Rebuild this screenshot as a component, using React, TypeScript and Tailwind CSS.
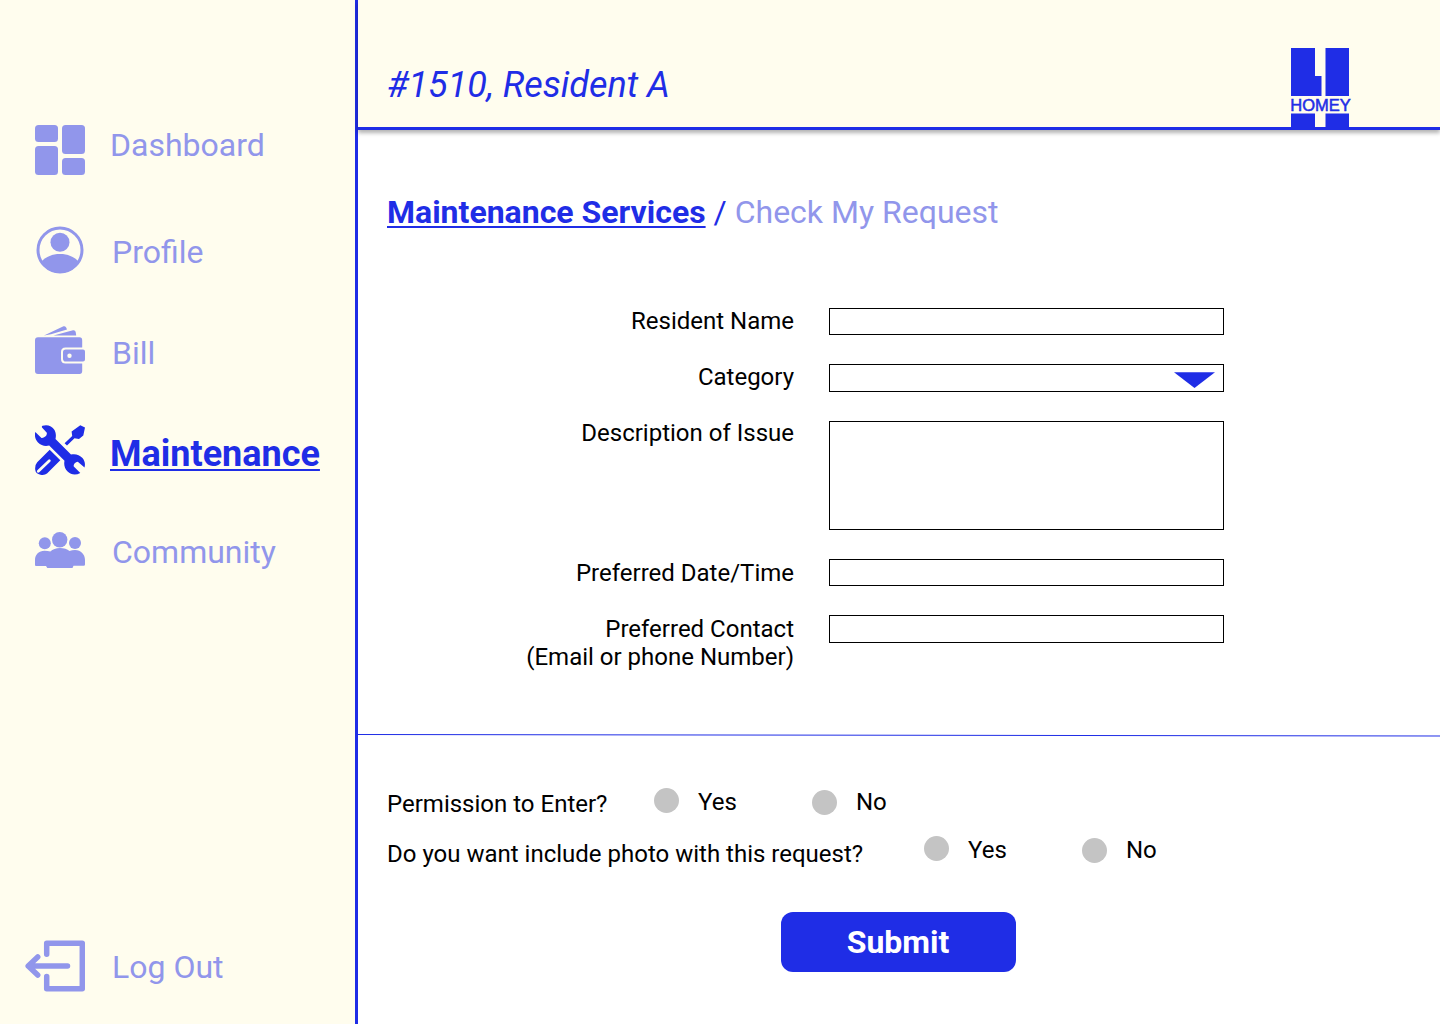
import React from 'react';

interface NavItemProps {
    label: string;
    icon: React.ReactNode;
    className?: string;
    labelClassName?: string;
}

const DashboardIcon = () => (
    <svg width="50" height="50" viewBox="0 0 50 50" fill="currentColor">
        <rect x="0" y="0" width="23" height="17" rx="3.5" />
        <rect x="27" y="0" width="23" height="29" rx="3.5" />
        <rect x="0" y="21" width="23" height="29" rx="3.5" />
        <rect x="27" y="33" width="23" height="17" rx="3.5" />
    </svg>
);

const ProfileIcon = () => (
    <svg width="50" height="50" viewBox="0 0 50 50" fill="currentColor">
        <circle cx="25" cy="25" r="22" fill="none" stroke="currentColor" strokeWidth="3" />
        <circle cx="25" cy="17.3" r="9.5" />
        <path d="M6.5 36.5C11 31.5 17.5 29 25 29s14 2.500 18.500 7.500C39.500 44 33 48 25 48S10.500 44 6.500 36.500z" />
    </svg>
);

const BillIcon = () => (
    <svg width="50" height="50" viewBox="0 0 50 50" fill="currentColor">
        <path d="M9 10.600L28.500 1.300Q30.500 .6 31.300 2.700L32 4.400L16 9.300z" />
        <path d="M18.500 10.600L38 5.200Q40.300 4.800 40.700 7L41.200 10.600z" />
        <path d="M3 12.200H44.500Q47.200 12.200 47.200 15.200V22.500H30.500Q26 22.500 26 27V34Q26 38.500 30.500 38.500H47.200V46Q47.200 49 44.500 49H3Q0 49 0 46V15.200Q0 12.200 3 12.200z" />
        <path fillRule="evenodd" d="M30.800 24.500H48Q50 24.500 50 26.500V34.500Q50 36.500 48 36.500H30.800Q28 36.500 28 33.700V27.300Q28 24.500 30.800 24.500zM34.500 28.500a2.200 2.200 0 1 0 0 4.400a2.200 2.200 0 1 0 0-4.400z" />
    </svg>
);

const MaintenanceIcon = () => (
    <svg width="50" height="50" viewBox="0 0 50 50" fill="currentColor">
        {/* wrench */}
        <path d="M7.500 .8C12 -.8 17 .8 19.500 5C21 8 21.200 10.500 20.500 14L36 29.500C40 28.500 44.500 29.500 47.500 33C49.800 35.800 50.500 39.200 49.500 42.600L42.800 36.800Q41 36.800 39.500 38.600Q38.300 40.300 38.800 41.600L45.300 48C40.800 50.500 36 50 32.600 46.500C29.500 43.300 28.700 39.500 29.500 35.800L14.200 20.500C10.300 21.500 6 20.700 3 17.500C.3 14.500 -.7 11 .3 7L6.500 13Q8.300 13.300 10.300 11.600Q12.200 9.800 11.800 7.700L7 2.500Q6.500 1.500 7.500 .8z" />
        {/* screwdriver */}
        <path d="M45.300 .2L50 2.500L48.300 10.500L44 13.900L39.500 13.300L32 20.600L29.600 18.200L37.200 10.900L36.600 6.400z" />
        <path d="M14.700 24.700L25.300 35.200L12 48.500Q9.500 50.500 5.500 49.700Q.5 48.800 .2 44.500Q-.2 40 2.200 37.300z" />
        <path d="M3.300 46.200L14.300 35.800" stroke="#fffdee" strokeWidth="2.800" strokeLinecap="round" />
    </svg>
);

const CommunityIcon = () => (
    <svg width="50" height="36" viewBox="0 0 50 36" fill="currentColor">
        <circle cx="9.800" cy="11.300" r="6" />
        <circle cx="24.700" cy="7.700" r="7.700" />
        <circle cx="40" cy="11" r="6" />
        <path d="M0 33V28C0 22.500 4 18.700 9.500 18.700Q13 18.700 15.300 19.500Q19 16 25 16T34.500 19Q37 18 40 18C46 18 50 22.500 50 28V32.500Q50 33.700 48.700 33.700H38.500L37.500 36H12.300L11 34H1Q0 34 0 33z" />
    </svg>
);

const LogoutIcon = () => (
    <svg width="60" height="52" viewBox="0 0 60 52" fill="none" stroke="currentColor" strokeWidth="5.500" strokeLinecap="round" strokeLinejoin="round">
        <path d="M21.700 14.300V3.300H57.300V48.700H21.700V36.500" />
        <path d="M42.500 26H3.500M12.700 17L3.200 26L12.700 35" />
    </svg>
);

const HomeyLogo = () => (
    <svg width="62" height="80" viewBox="0 0 62 80" className="text-[#1f2de6]" fill="currentColor">
        <path d="M0 0H24V28H30.500V48H0zM34.500 0H58V48H34.500z" />
        <text
            x="-0.700"
            y="63"
            fontSize="15.600"
            textLength="60.500"
            lengthAdjust="spacingAndGlyphs"
            fontFamily="'Liberation Sans', sans-serif"
            stroke="currentColor"
            strokeWidth="0.500"
        >
            HOMEY
        </text>
        <path d="M0 65.500H24V80H0zM34.500 65.500H58V80H34.500z" />
    </svg>
);

const NavItem: React.FC<NavItemProps> = ({ label, icon, className = '', labelClassName = '' }) => (
    <a href="#" className={`flex h-[50px] text-[#9196eb] ${className}`}>
        <span className="flex w-[50px] shrink-0 items-center">{icon}</span>
        <span className={`whitespace-nowrap text-[32px] leading-[38px] ${labelClassName}`}>{label}</span>
    </a>
);

const FormRow = ({ label, children, className = '' }: { label: React.ReactNode; children: React.ReactNode; className?: string }) => (
    <label className={`flex items-start ${className}`}>
        <span className="w-[436px] text-right">{label}</span>
        <span className="ml-[35px] block w-[395px]">{children}</span>
    </label>
);

const Choice = ({ label, className = '', dotClassName = '' }: { label: string; className?: string; dotClassName?: string }) => (
    <label className={`flex w-[158px] items-start ${className}`}>
        <span className={`size-[25px] rounded-full bg-[#c4c4c4] ${dotClassName}`}></span>
        <span className="ml-[19px]">{label}</span>
    </label>
);

const App: React.FC = () => {
    return (
        <div className="flex h-[1024px] w-[1440px] overflow-hidden bg-white font-['Roboto',sans-serif] text-black">
            <aside className="flex w-[358px] shrink-0 flex-col border-r-[3px] border-[#1f2de6] bg-[#fffdee] pt-[125px] pl-[35px]">
                <NavItem label="Dashboard" icon={<DashboardIcon />} labelClassName="ml-[25px] mt-px" />
                <NavItem label="Profile" icon={<ProfileIcon />} className="mt-[50px]" labelClassName="ml-[27px] mt-[8px]" />
                <NavItem label="Bill" icon={<BillIcon />} className="mt-[50px]" labelClassName="ml-[27px] mt-[9px]" />
                <NavItem
                    label="Maintenance"
                    icon={<MaintenanceIcon />}
                    className="mt-[50px] text-[#1f2de6]!"
                    labelClassName="ml-[25px] mt-[8px] text-[36px]! leading-[42px]! font-bold underline decoration-2 underline-offset-[3px]"
                />
                <NavItem label="Community" icon={<CommunityIcon />} className="mt-[50px]" labelClassName="ml-[27px] mt-[8px]" />
                <a href="#" className="mt-auto mb-[32px] -ml-[10px] flex text-[#9196eb]">
                    <LogoutIcon />
                    <span className="mt-[8px] ml-[27px] text-[32px] leading-[38px]">Log Out</span>
                </a>
            </aside>

            <main className="flex min-w-0 flex-1 flex-col">
                <header className="flex h-[130px] shrink-0 justify-between border-b-[3px] border-[#1f2de6] bg-[#fffdee] pr-[87px] pl-[29px] shadow-[0_3px_4px_rgba(0,0,0,0.3)]">
                    <h1 className="mt-[64px] text-[36px] leading-[42px] italic">
                        <span className="text-[#1f2de6]">#1510, Resident A</span>
                    </h1>
                    <div className="mt-[48px]">
                        <HomeyLogo />
                    </div>
                </header>

                <nav className="mt-[63px] ml-[29px] text-[32px] leading-[38px] text-[#1f2de6]">
                    <a href="#" className="font-bold underline decoration-2 underline-offset-[3px]">Maintenance Services</a>
                    <span> / </span>
                    <a href="#" className="text-[#9196eb]">Check My Request</a>
                </nav>

                <form className="flex flex-1 flex-col text-[24px] leading-[28px]">
                    <section className="mt-[76px] h-[427px]">
                        <FormRow label="Resident Name" className="h-[56px]">
                            <input className="mt-px block h-[27px] w-full border border-black" />
                        </FormRow>
                        <FormRow label="Category" className="h-[56px]">
                            <span className="mt-px flex h-[28px] w-full items-start justify-end border border-black pt-[7px] pr-[8px]">
                                <svg width="41" height="16" viewBox="0 0 41 16">
                                    <path d="M0 .3H41L20.500 16z" fill="#1f2de6" />
                                </svg>
                            </span>
                        </FormRow>
                        <FormRow label="Description of Issue" className="h-[140px]">
                            <textarea className="mt-[2px] block h-[109px] w-full resize-none border border-black" />
                        </FormRow>
                        <FormRow label="Preferred Date/Time" className="h-[56px]">
                            <input className="block h-[27px] w-full border border-black" />
                        </FormRow>
                        <FormRow label={<>Preferred Contact<br />(Email or phone Number)</>}>
                            <input className="block h-[28px] w-full border border-black" />
                        </FormRow>
                    </section>

                    <svg width="1082" height="4" viewBox="0 0 1082 4" className="shrink-0">
                        <path d="M0 .5L1082 2" stroke="#1f2de6" strokeWidth="1" />
                    </svg>

                    <div className="mt-[50px] ml-[29px] flex h-[48px]">
                        <span className="mt-[2px] w-[267px]">Permission to Enter?</span>
                        <Choice label="Yes" />
                        <Choice label="No" dotClassName="mt-[2px]" />
                    </div>
                    <div className="ml-[29px] flex h-[76px]">
                        <span className="mt-[4px] w-[537px]">Do you want include photo with this request?</span>
                        <Choice label="Yes" />
                        <Choice label="No" dotClassName="mt-[2px]" />
                    </div>

                    <button type="button" className="ml-[423px] h-[60px] w-[235px] rounded-[12px] bg-[#1f2de6] pr-px text-[32px] font-bold text-white">
                        Submit
                    </button>
                </form>
            </main>
        </div>
    );
};

export default App;
